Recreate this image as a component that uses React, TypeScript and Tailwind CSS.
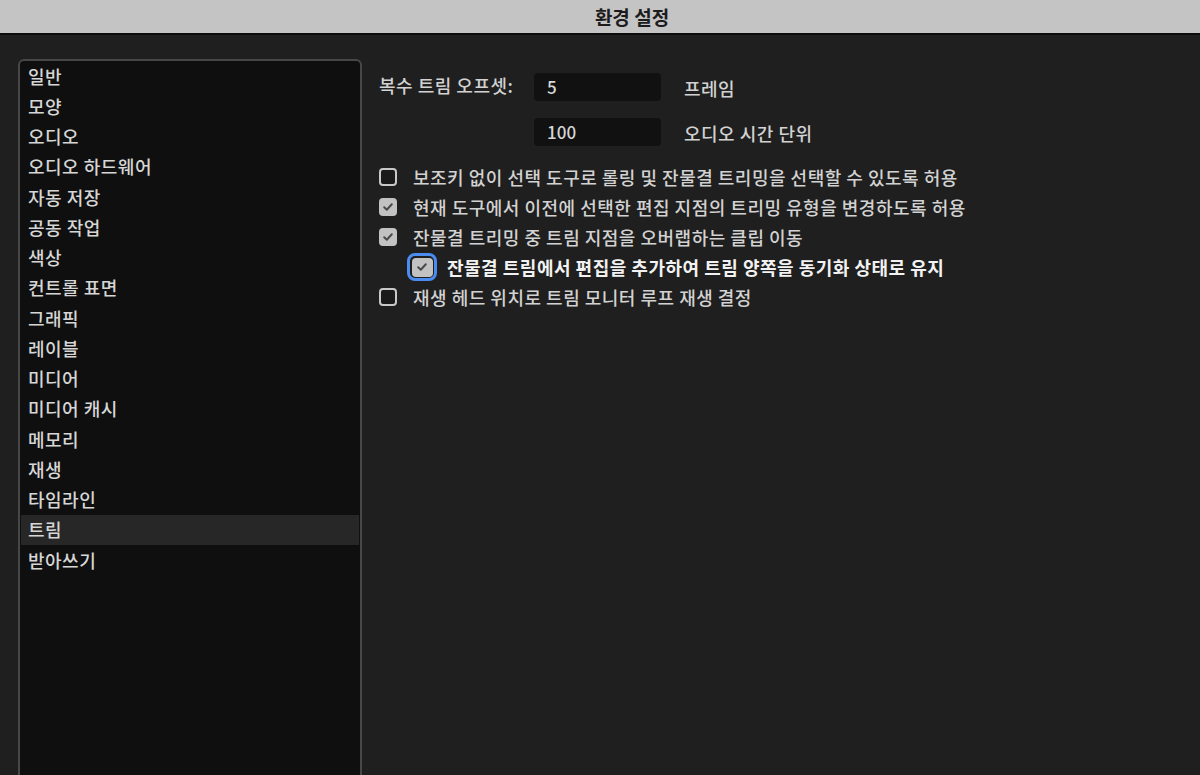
import React from "react";

const FONT = { fontFamily: '"Noto Sans CJK KR", "Noto Sans", sans-serif' };

const items = [
  "일반",
  "모양",
  "오디오",
  "오디오 하드웨어",
  "자동 저장",
  "공동 작업",
  "색상",
  "컨트롤 표면",
  "그래픽",
  "레이블",
  "미디어",
  "미디어 캐시",
  "메모리",
  "재생",
  "타임라인",
  "트림",
  "받아쓰기",
];

function Box({ checked, wide }: { checked: boolean; wide?: boolean }) {
  if (checked) {
    return (
      <div
        className={`${wide ? "w-[21px] h-[19px]" : "w-[18px] h-[18px]"} rounded-[4px] bg-[#c2c2c2] flex items-center justify-center shrink-0`}
      >
        <svg width="12" height="12" viewBox="0 0 12 12">
          <path d="M2.2 6.2 L4.8 8.7 L9.8 3.3" fill="none" stroke="#4a4a4a" strokeWidth="2" strokeLinecap="round" strokeLinejoin="round" />
        </svg>
      </div>
    );
  }
  return <div className="w-[18px] h-[18px] rounded-[4px] border-[2.5px] border-[#c8c8c8] bg-[#1a1a1a] shrink-0" />;
}

function Row({ checked, text, focused, indent }: { checked: boolean; text: string; focused?: boolean; indent?: boolean }) {
  return (
    <div className={`flex items-center h-[30px] ${indent ? "pl-[33px]" : ""}`}>
      {focused ? (
        <div className="rounded-[8px] border-[3px] border-[#4b8cf0] p-[1.5px] -my-[5px] -ml-[5px] -mr-[3px]">
          <Box checked={checked} wide />
        </div>
      ) : (
        <Box checked={checked} />
      )}
      <span
        className={`text-[18px] leading-[30px] tracking-[0.5px] whitespace-nowrap ${
          focused ? "text-[#f2f2f2] font-semibold ml-[13px]" : "text-[#d2d2d2] font-medium ml-[16px]"
        }`}
      >
        {text}
      </span>
    </div>
  );
}

export default function App() {
  return (
    <div className="w-[1200px] h-[775px] overflow-hidden bg-[#1f1f1f] flex flex-col" style={FONT}>
      <div className="h-[35px] shrink-0 bg-[#c5c4c5] border-b-2 border-[#0d0d0d] flex items-center justify-center pl-[64px]">
        <span className="text-[19px] font-bold text-[#1c1c1c] leading-none">환경 설정</span>
      </div>
      <div className="flex flex-1 pt-[24px] pl-[18px]">
        <div className="w-[344px] h-[740px] shrink-0 border-2 border-[#474747] rounded-t-[6px] bg-[#0f0f0f] px-[1px]">
          {items.map((it) => (
            <div
              key={it}
              className={`h-[30.25px] flex items-center pl-[7px] text-[18px] tracking-[0.5px] font-medium text-[#d6d6d6] ${
                it === "트림" ? "bg-[#272727]" : ""
              }`}
            >
              {it}
            </div>
          ))}
        </div>
        <div className="flex flex-col pl-[17px] pt-[14px]">
          <div className="flex items-start h-[28px]">
            <div className="w-[155px] text-[18px] tracking-[0.5px] leading-[24px] font-medium text-[#d2d2d2]">복수 트림 오프셋:</div>
            <div className="w-[127px] h-[28px] rounded-[4px] bg-[#111111] flex items-center pl-[13px] text-[17px] font-medium text-[#d6d6d6]">
              5
            </div>
            <div className="ml-[23px] text-[18px] tracking-[0.5px] leading-[30px] font-medium text-[#d2d2d2]">프레임</div>
          </div>
          <div className="flex items-start h-[28px] mt-[17px]">
            <div className="w-[155px]" />
            <div className="w-[127px] h-[28px] rounded-[4px] bg-[#111111] flex items-center pl-[13px] text-[17px] font-medium text-[#d6d6d6]">
              100
            </div>
            <div className="ml-[23px] text-[18px] tracking-[0.5px] leading-[30px] font-medium text-[#d2d2d2]">오디오 시간 단위</div>
          </div>
          <div className="mt-[16px] flex flex-col">
            <Row checked={false} text="보조키 없이 선택 도구로 롤링 및 잔물결 트리밍을 선택할 수 있도록 허용" />
            <Row checked text="현재 도구에서 이전에 선택한 편집 지점의 트리밍 유형을 변경하도록 허용" />
            <Row checked text="잔물결 트리밍 중 트림 지점을 오버랩하는 클립 이동" />
            <Row checked focused indent text="잔물결 트림에서 편집을 추가하여 트림 양쪽을 동기화 상태로 유지" />
            <Row checked={false} text="재생 헤드 위치로 트림 모니터 루프 재생 결정" />
          </div>
        </div>
      </div>
    </div>
  );
}
